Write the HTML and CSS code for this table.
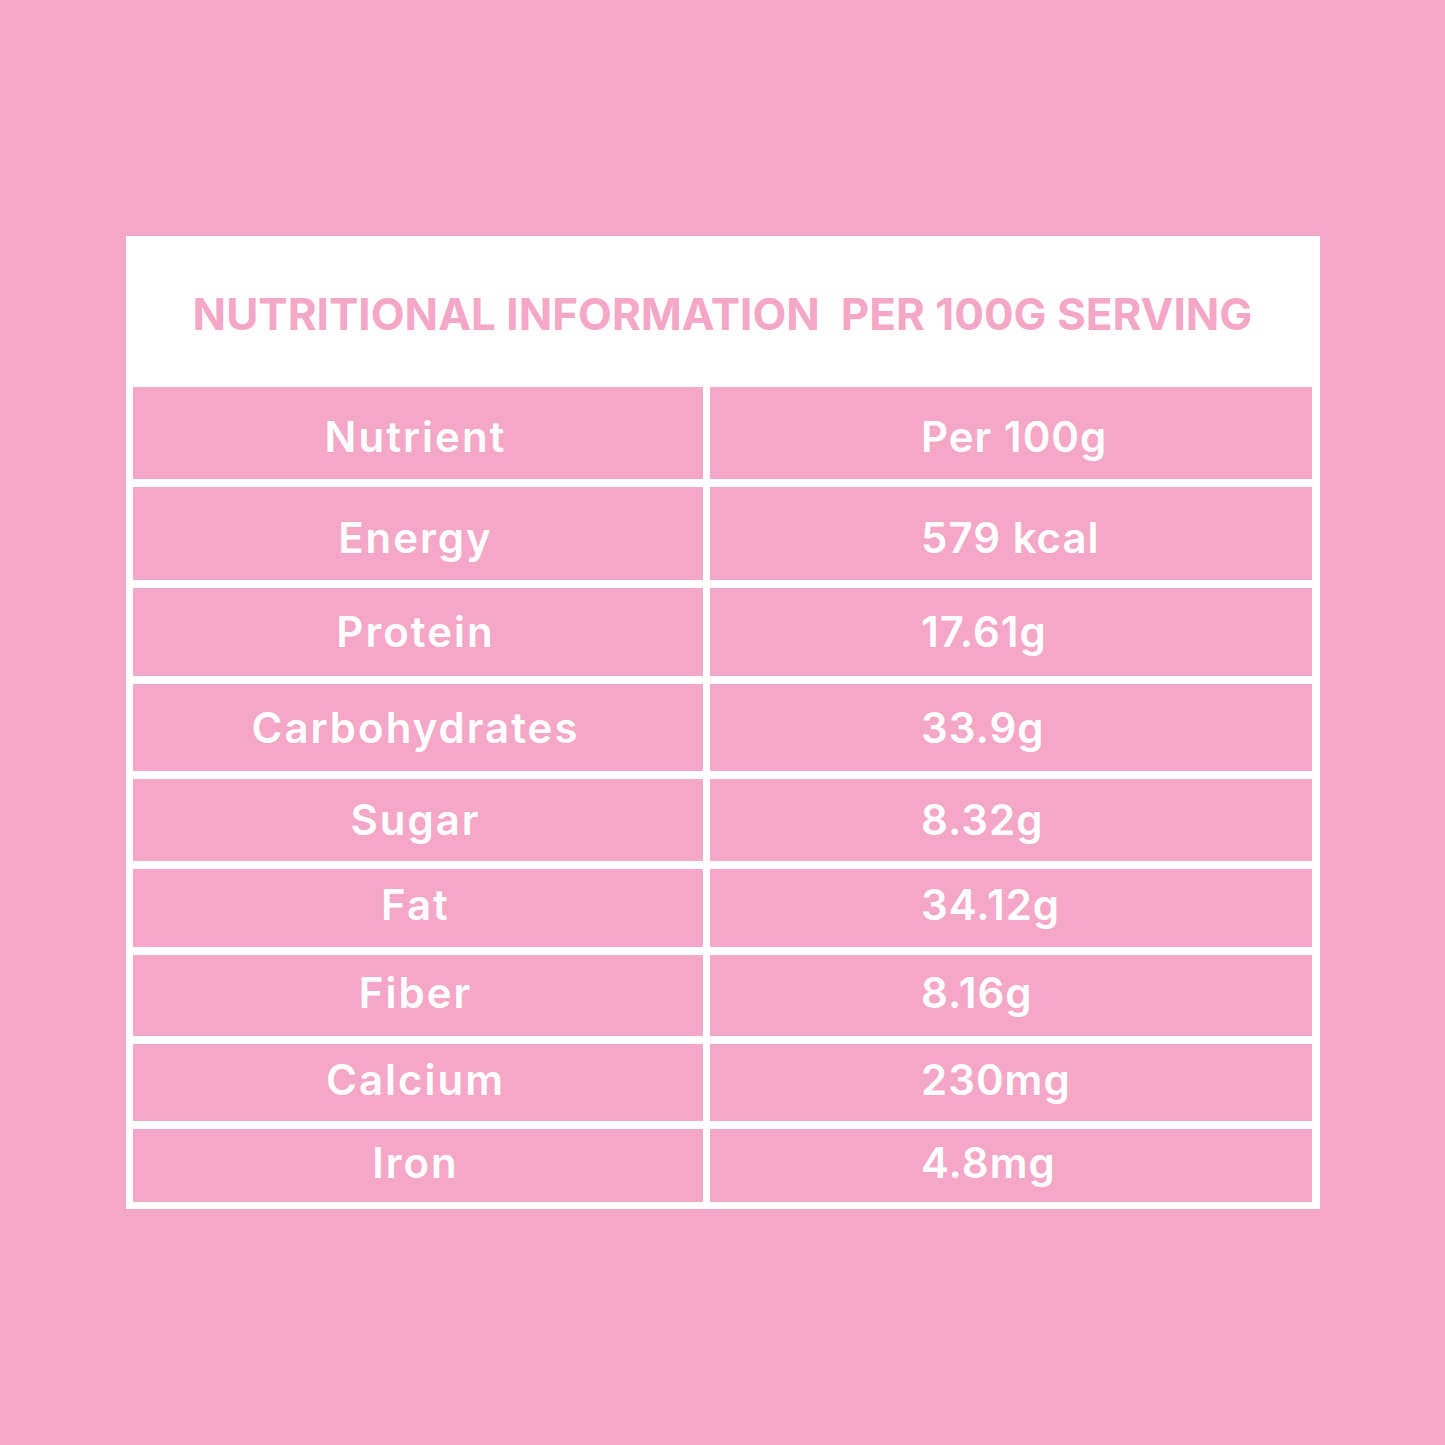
FILE: index.html
```html
<!DOCTYPE html>
<html lang="en">
<head>
<meta charset="utf-8">
<title>Nutritional Information</title>
<link rel="stylesheet" href="styles.css">
</head>
<body>
<main class="page">
  <section class="card">
    <h1 class="title">NUTRITIONAL INFORMATION&nbsp; PER 100G SERVING</h1>
    <div class="table">
      <div class="cell name">Nutrient</div><div class="cell value">Per 100g</div>
      <div class="cell name">Energy</div><div class="cell value">579 kcal</div>
      <div class="cell name">Protein</div><div class="cell value">17.61g</div>
      <div class="cell name">Carbohydrates</div><div class="cell value">33.9g</div>
      <div class="cell name">Sugar</div><div class="cell value">8.32g</div>
      <div class="cell name">Fat</div><div class="cell value">34.12g</div>
      <div class="cell name">Fiber</div><div class="cell value">8.16g</div>
      <div class="cell name">Calcium</div><div class="cell value">230mg</div>
      <div class="cell name">Iron</div><div class="cell value">4.8mg</div>
    </div>
  </section>
</main>
</body>
</html>
```

FILE: styles.css
```css
html, body {
  margin: 0;
  padding: 0;
  background: #f4a7c6;
}

.page {
  padding: 236px 0 0 126px;
  height: 1445px;
  box-sizing: border-box;
}

.card {
  width: 1194px;
  background: #ffffff;
  padding: 0 8px 7px 7px;
  box-sizing: border-box;
}

.title {
  margin: 0;
  height: 151px;
  display: flex;
  align-items: center;
  justify-content: center;
  padding-top: 4px;
  box-sizing: border-box;
  font-family: "Inter", "Noto Sans", sans-serif;
  font-weight: 700;
  font-size: 44px;
  letter-spacing: 0;
  color: #f4a7c6;
  white-space: nowrap;
}

.table {
  display: grid;
  grid-template-columns: 570px 602px;
  grid-template-rows: 92px 93px 88px 87px 82px 78px 81px 77px 73px;
  column-gap: 7px;
  row-gap: 8px;
}

.cell {
  background: #f4a7c6;
  color: #ffffff;
  display: flex;
  align-items: center;
  font-family: "Inter", "Noto Sans", sans-serif;
  font-weight: 600;
  font-size: 42px;
  line-height: 1;
  box-sizing: border-box;
}

.cell:nth-child(-n+4) {
  padding-top: 8px;
}

.cell:nth-child(n+11) {
  padding-bottom: 6px;
}

.name {
  justify-content: center;
  letter-spacing: 2px;
  padding-right: 5px;
}

.value {
  padding-left: 211px;
  letter-spacing: 1px;
}
```
